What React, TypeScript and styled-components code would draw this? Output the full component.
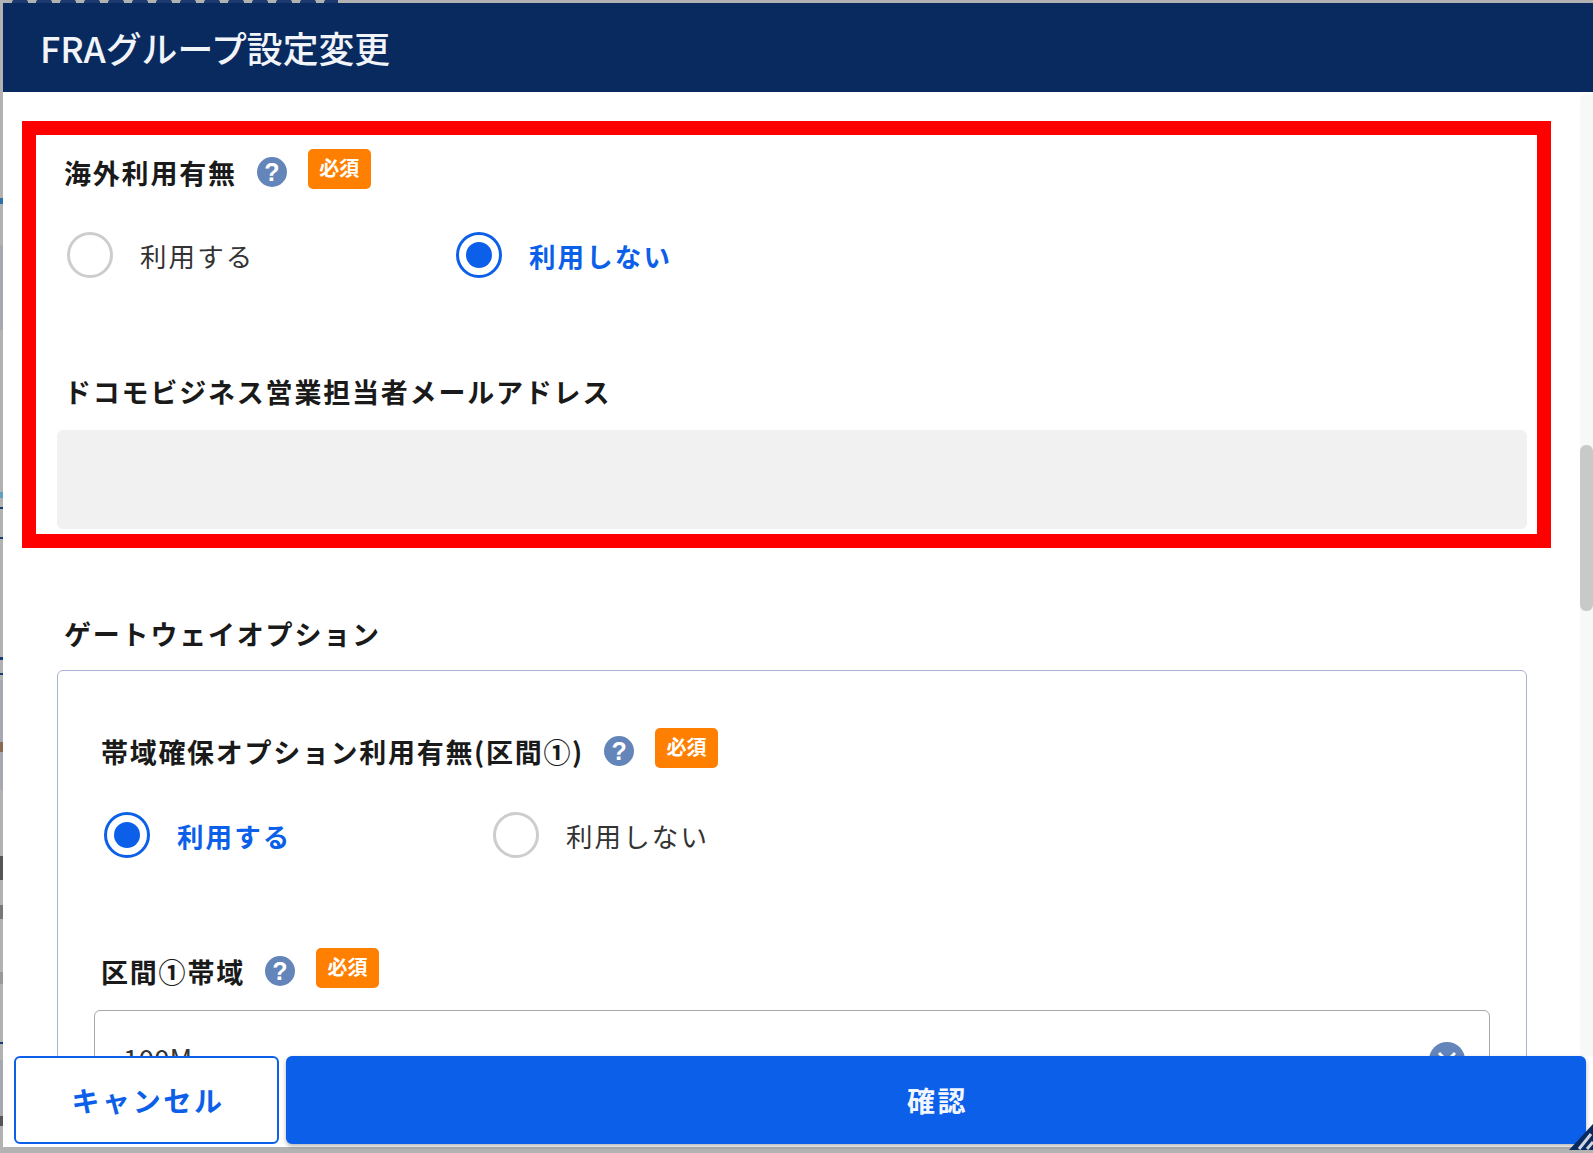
import React from 'react'
import styled, { createGlobalStyle } from 'styled-components'

const GlobalStyle = createGlobalStyle`
  html, body {
    margin: 0;
    padding: 0;
    height: 100%;
    overflow: hidden;
    background: #ababab;
    font-family: "Noto Sans CJK JP", "Noto Sans", sans-serif;
  }
`

// the page behind the modal only peeks out along the left edge
const band = (color: string, y: number, h: number) =>
  `linear-gradient(${color}, ${color}) 0 ${y}px / 3px ${h}px no-repeat`

const Backdrop = styled.div`
  position: relative;
  width: 1593px;
  height: 1153px;
  padding: 3px 0 3px 3px;
  box-sizing: border-box;
  background:
    ${band('#2f6fa8', 198, 6)},
    ${band('#5f9fc0', 492, 6)},
    ${band('#123a7a', 507, 2)},
    ${band('#123a7a', 537, 2)},
    ${band('#123a7a', 657, 3)},
    ${band('#123a7a', 673, 2)},
    ${band('#8a6a50', 742, 10)},
    ${band('#555', 856, 24)},
    ${band('#777', 905, 14)},
    ${band('#999', 972, 12)},
    ${band('#123a7a', 1042, 2)},
    ${band('#555', 1116, 10)},
    ${band('#a6a9b0', 245, 85)},
    ${band('#a6a9b0', 680, 110)},
    ${band('#a6a9b0', 1060, 60)},
    #b2b2b2;
`

const TopFragments = styled.div`
  position: absolute;
  top: 0;
  left: 8px;
  width: 330px;
  height: 3px;
  background: radial-gradient(circle at 50% 130%, #1c3a6e 62%, transparent 66%) 0 0 / 24px 3px repeat-x;
`

const Modal = styled.div`
  position: relative;
  height: 100%;
  display: flex;
  flex-direction: column;
  background: #fff;
  overflow: hidden;
`

const Header = styled.header`
  flex: none;
  height: 89px;
  box-sizing: border-box;
  padding: 0 0 2px 37px;
  display: flex;
  align-items: center;
  background: #082a5f;
  color: #f1f4f8;
  font-size: 35.8px;
  font-weight: 500;
`

const Body = styled.div`
  flex: 1;
  min-height: 0;
  display: flex;
  overflow: hidden;
`

const Content = styled.div`
  flex: 1;
  min-width: 0;
  padding: 29px 29px 0 19px;
`

const Highlight = styled.section`
  height: 427px;
  box-sizing: border-box;
  border: 14px solid #ff0000;
  padding: 14px 10px 0 21px;
`

const LabelRow = styled.div`
  display: flex;
  align-items: flex-start;
  height: 40px;
  margin-top: ${p => p.$top ?? 0}px;
`

const Label = styled.span`
  margin: 6px 0 0 7px;
  font-size: 27px;
  line-height: 36px;
  font-weight: 700;
  letter-spacing: ${p => p.$spacing ?? 1.8}px;
  color: #1a1a1a;
  white-space: nowrap;
`

const BlockLabel = styled(Label).attrs({ as: 'div' })`
  margin-top: ${p => p.$top}px;
`

const HelpIcon = styled.span`
  flex: none;
  width: 30px;
  height: 30px;
  margin: 8px 0 0 20px;
  border-radius: 50%;
  background: #6485ba;
  color: #fff;
  font-family: "Liberation Sans", sans-serif;
  font-size: 25px;
  font-weight: 700;
  line-height: 30px;
  text-align: center;
`

const RequiredBadge = styled.span`
  flex: none;
  width: 63px;
  height: 40px;
  margin-left: 21px;
  border-radius: 5px;
  background: #ff7f00;
  color: #fff;
  font-size: 20px;
  font-weight: 700;
  line-height: 38px;
  text-align: center;
`

const RadioGroup = styled.div`
  display: grid;
  grid-template-columns: 389px auto;
  justify-content: start;
  margin: ${p => p.$top}px 0 0 ${p => p.$left}px;
`

const RadioOption = styled.label`
  display: flex;
  align-items: center;
  gap: 27px;
  height: 46px;
  font-size: 26.5px;
  letter-spacing: 2.1px;
  font-weight: ${p => (p.$checked ? 700 : 400)};
  color: ${p => (p.$checked ? '#0b5fe8' : '#333')};
`

const RadioMark = styled.span`
  flex: none;
  position: relative;
  width: 46px;
  height: 46px;
  box-sizing: border-box;
  border-radius: 50%;
  border: 3px solid ${p => (p.$checked ? '#0b5fe8' : '#cdcdcd')};

  &::after {
    content: '';
    display: ${p => (p.$checked ? 'block' : 'none')};
    position: absolute;
    inset: 7px;
    border-radius: 50%;
    background: #0b5fe8;
  }
`

const ReadOnlyField = styled.div`
  height: 99px;
  margin-top: 20px;
  border-radius: 6px;
  background: #f1f1f1;
`

const Section = styled.section`
  margin: 68px 24px 0 35px;
`

const OptionBox = styled.div`
  height: 600px;
  margin-top: 18px;
  box-sizing: border-box;
  border: 1.5px solid #a7b4d2;
  border-radius: 6px;
  padding: 57px 36px 0 36px;
`

const SelectBox = styled.div`
  position: relative;
  height: 120px;
  margin-top: 22px;
  box-sizing: border-box;
  border: 1.5px solid #a8a8a8;
  border-radius: 6px;
  padding: 29px 0 0 28px;
  font-size: 28px;
  line-height: 36px;
  color: #333;
`

const SelectIcon = styled.svg`
  position: absolute;
  top: 31px;
  right: 24px;
`

const Scrollbar = styled.div`
  flex: none;
  position: relative;
  width: 13px;
  margin-top: 2px;
  border-radius: 6px 0 0 6px;
  background: #f8f8f8;
`

const ScrollThumb = styled.div`
  position: absolute;
  top: 351px;
  left: 0;
  right: 0;
  height: 166px;
  border-radius: 6px;
  background: #c9c9c9;
`

const Footer = styled.footer`
  position: absolute;
  left: 0;
  right: 0;
  bottom: 3px;
  box-sizing: border-box;
  height: 91px;
  padding: 0 7px 3px 11px;
  display: grid;
  grid-template-columns: 265px 1fr;
  gap: 7px;
  background: #fff;
`

const FooterButton = styled.button`
  box-sizing: border-box;
  border-radius: 6px;
  border: 2px solid #0b5fe8;
  background: ${p => (p.$primary ? '#0b5fe8' : '#fff')};
  color: ${p => (p.$primary ? '#f2f6fe' : '#0b5fe8')};
  box-shadow: ${p => (p.$primary ? '0 2px 4px rgba(0, 0, 0, 0.3)' : 'none')};
  font-family: inherit;
  font-size: 28px;
  font-weight: 700;
  letter-spacing: 2.6px;
  padding: 0 0 0 3px;
`

const ResizeHandle = styled.svg`
  position: absolute;
  right: 0;
  bottom: 0;
`

const BottomEdge = styled.div`
  position: absolute;
  left: 0;
  right: 0;
  bottom: 0;
  height: 3px;
  background: #b2b2b2;
`

const FieldLabel = ({ children, top, spacing }: { children: React.ReactNode; top?: number; spacing?: number }) => (
  <LabelRow $top={top}>
    <Label $spacing={spacing}>{children}</Label>
    <HelpIcon>?</HelpIcon>
    <RequiredBadge>必須</RequiredBadge>
  </LabelRow>
)

const Radios = ({ selected, top, left }: { selected: number; top: number; left: number }) => (
  <RadioGroup $top={top} $left={left}>
    {['利用する', '利用しない'].map((text, i) => (
      <RadioOption key={text} $checked={selected === i}>
        <RadioMark $checked={selected === i} />
        {text}
      </RadioOption>
    ))}
  </RadioGroup>
)

export default function App() {
  return (
    <>
      <GlobalStyle />
      <Backdrop>
        <TopFragments />
        <Modal>
          <Header>FRAグループ設定変更</Header>
          <Body>
            <Content>
              <Highlight>
                <FieldLabel>海外利用有無</FieldLabel>
                <Radios selected={1} top={43} left={10} />
                <BlockLabel $top={96}>ドコモビジネス営業担当者メールアドレス</BlockLabel>
                <ReadOnlyField />
              </Highlight>
              <Section>
                <BlockLabel $top={0}>ゲートウェイオプション</BlockLabel>
                <OptionBox>
                  <FieldLabel spacing={1.7}>帯域確保オプション利用有無(区間①)</FieldLabel>
                  <Radios selected={0} top={44} left={10} />
                  <FieldLabel top={90}>区間①帯域</FieldLabel>
                  <SelectBox>
                    100M
                    <SelectIcon width="36" height="36" viewBox="0 0 36 36">
                      <circle cx="18" cy="18" r="18" fill="#6485ba" />
                      <path d="M10 11l8 8 8-8" fill="none" stroke="#fff" strokeWidth="3" />
                    </SelectIcon>
                  </SelectBox>
                </OptionBox>
              </Section>
            </Content>
            <Scrollbar>
              <ScrollThumb />
            </Scrollbar>
          </Body>
          <BottomEdge />
          <Footer>
            <FooterButton>キャンセル</FooterButton>
            <FooterButton $primary>確認</FooterButton>
          </Footer>
          <ResizeHandle width="24" height="26" viewBox="0 0 24 26">
            <path d="M0 26L24 0v26z" fill="#082a5f" />
            <path d="M10 25L22 10M18 25l6-7" stroke="#cfd6e2" strokeWidth="3" />
          </ResizeHandle>
        </Modal>
      </Backdrop>
    </>
  )
}
